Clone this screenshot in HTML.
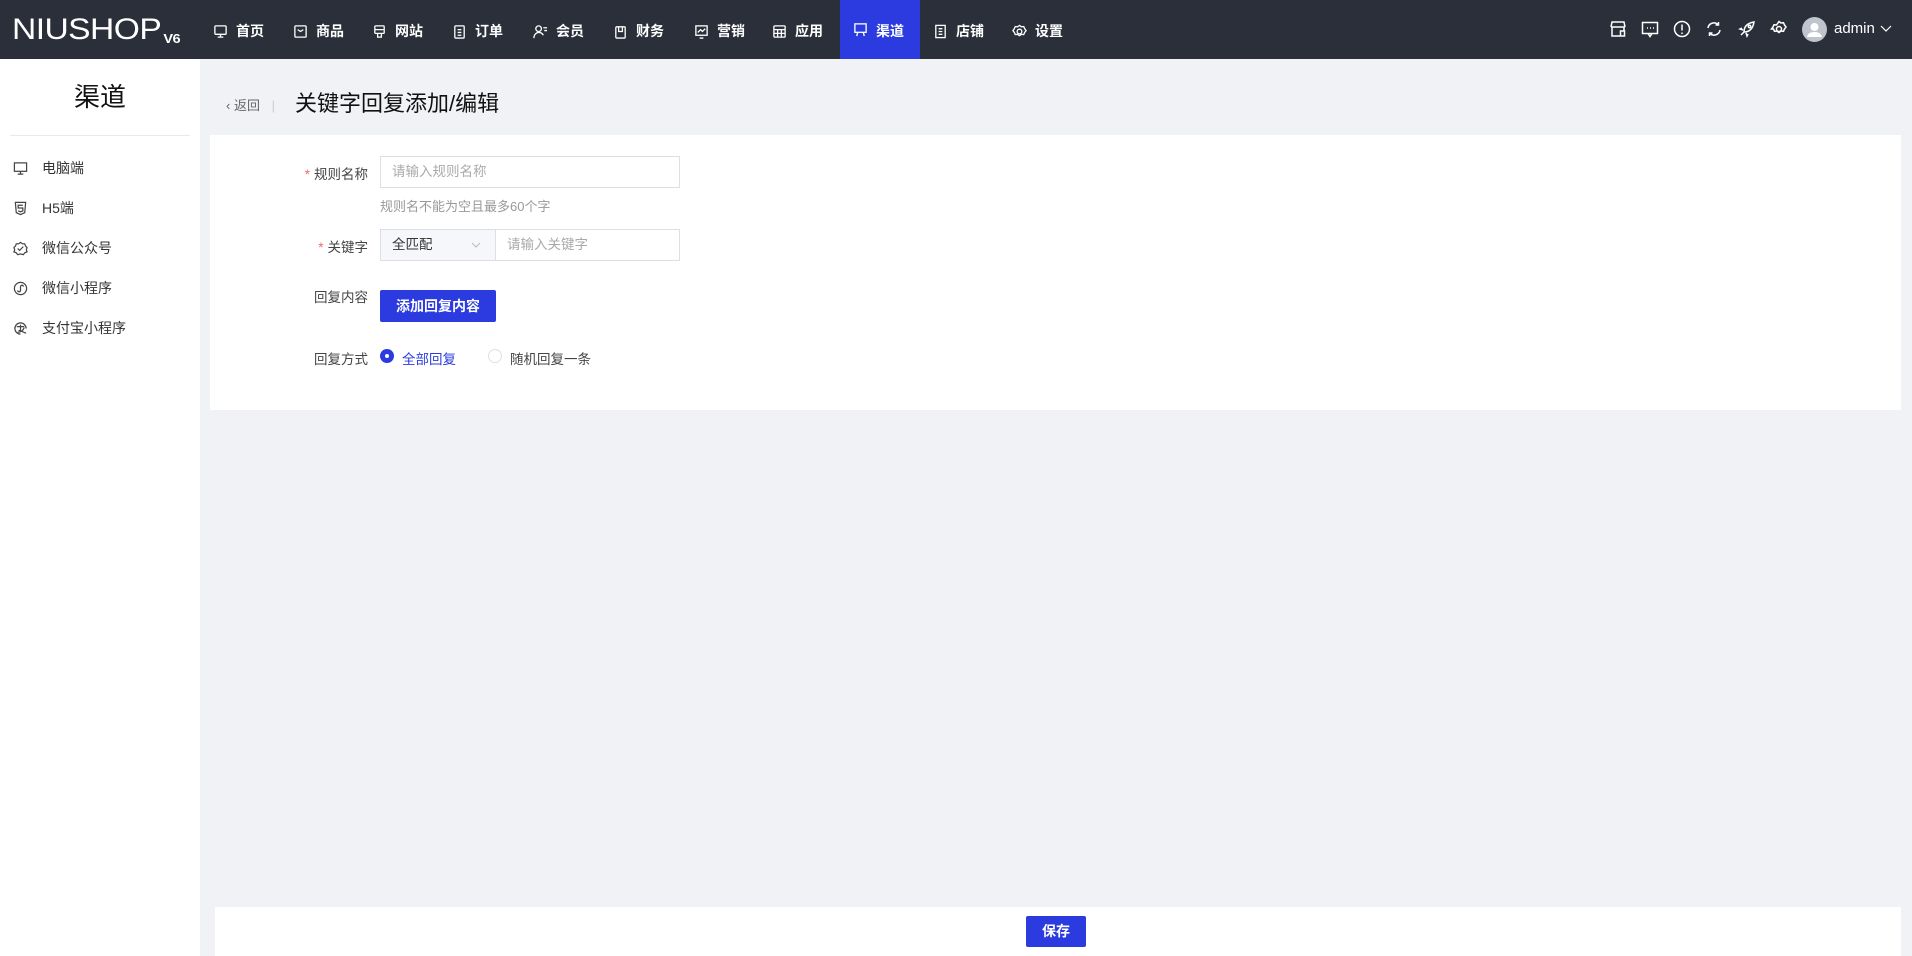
<!DOCTYPE html>
<html><head><meta charset="utf-8"><style>
*{margin:0;padding:0;box-sizing:border-box}
body{width:1912px;height:956px;overflow:hidden;background:#f0f2f5;font-family:"Liberation Sans","Noto Sans CJK SC",sans-serif;position:relative;color:#333}
.top{position:absolute;left:0;top:0;width:1912px;height:59px;background:#2b2f3a;color:#fff}
.logo{position:absolute;left:12px;top:13px;font-size:30px;font-weight:normal;color:#fff;transform:scaleX(1.12);transform-origin:left;letter-spacing:-0.5px}
.logo sub{font-size:13px;vertical-align:baseline;position:relative;top:4px;margin-left:2px;font-weight:bold}
.nav{position:absolute;top:2px;height:59px;line-height:59px;font-size:14px;font-weight:bold;color:#fff;display:flex;align-items:center}
.nav svg{width:15px;height:15px;margin-right:8px;stroke:#fff;fill:none;stroke-width:1.4}
.act{background:#2b3be0;padding:0 0 0 13px;width:80px;top:0}
.ri{position:absolute;top:20px;width:18px;height:18px;stroke:#fff;fill:none;stroke-width:1.5}
.side{position:absolute;left:0;top:59px;width:200px;height:897px;background:#fff}
.side h2{position:absolute;left:0;width:200px;text-align:center;top:18px;font-size:26px;font-weight:normal;color:#111}
.side .div{position:absolute;left:10px;width:180px;top:76px;border-top:1px solid #e8e9ee}
.mi{position:absolute;left:13px;font-size:14px;color:#333;display:flex;align-items:center}
.mi svg{width:15px;height:15px;stroke:#444;fill:none;stroke-width:1.3;margin-right:14px}
.bc{position:absolute;left:226px;top:95px;font-size:13px;color:#666}
.title{position:absolute;left:295px;top:86px;font-size:22px;color:#111}
.card{position:absolute;left:210px;top:135px;width:1691px;height:275px;background:#fff}
.lab{position:absolute;width:160px;left:208px;text-align:right;font-size:13.5px;color:#444}
.lab i{color:#f56c6c;font-style:normal;margin-right:4px}
.inp{position:absolute;border:1px solid #dcdfe6;background:#fff;font-size:13.5px;color:#aaa;padding-left:11px;line-height:30px;height:32px}
.btn{position:absolute;background:#2b3be0;color:#fff;font-weight:bold;font-size:14px;text-align:center;border-radius:2px}
.bot{position:absolute;left:215px;top:907px;width:1686px;height:49px;background:#fff}
</style></head><body>
<div class="top">
<div class="logo">NIUSHOP<sub>V6</sub></div>
<div class="nav" style="left:213px"><svg viewBox="0 0 16 16"><rect x="2" y="2" width="12" height="9" rx="1"/><path d="M8 11v3M5 14h6"/></svg>首页</div>
<div class="nav" style="left:293px"><svg viewBox="0 0 16 16"><rect x="2" y="2" width="12" height="12" rx="1"/><path d="M5 6l3 2 3-2"/></svg>商品</div>
<div class="nav" style="left:372px"><svg viewBox="0 0 16 16"><rect x="3" y="2" width="10" height="8" rx="1"/><path d="M3 6h10M6 10v4h4v-4"/></svg>网站</div>
<div class="nav" style="left:452px"><svg viewBox="0 0 16 16"><rect x="3" y="2" width="10" height="13" rx="1"/><path d="M6 6h4M6 9h4M6 12h4"/></svg>订单</div>
<div class="nav" style="left:533px"><svg viewBox="0 0 16 16"><circle cx="6" cy="5" r="3"/><path d="M1 15c0-4 3-6 5-6s4 1 5 3M11 4h4M12 7h3"/></svg>会员</div>
<div class="nav" style="left:613px"><svg viewBox="0 0 16 16"><rect x="3" y="3" width="10" height="12" rx="1"/><path d="M6 3v5h4V3"/></svg>财务</div>
<div class="nav" style="left:694px"><svg viewBox="0 0 16 16"><rect x="2" y="2" width="12" height="10"/><path d="M4 9l3-3 2 2 3-3M6 15h4"/></svg>营销</div>
<div class="nav" style="left:772px"><svg viewBox="0 0 16 16"><rect x="2" y="2" width="12" height="12" rx="1"/><path d="M2 6h12M2 10h12M6 6v8M10 6v8"/></svg>应用</div>
<div class="nav act" style="left:840px"><svg viewBox="0 0 16 16"><rect x="2" y="2" width="12" height="9"/><path d="M5 11l-1 4M11 11l1 4"/></svg><span style="position:relative;top:2px">渠道</span></div>
<div class="nav" style="left:933px"><svg viewBox="0 0 16 16"><rect x="3" y="1.5" width="10" height="13"/><path d="M6 5h4M6 8h4M6 11h4"/></svg>店铺</div>
<div class="nav" style="left:1012px"><svg viewBox="0 0 16 16"><circle cx="8" cy="8" r="2.5"/><path d="M8 1.5l2 1.5 2.5-.3 1 2.3 1.5 2-1.5 2-1 2.3-2.5-.3-2 1.5-2-1.5-2.5.3-1-2.3L1 7l1.5-2 1-2.3 2.5.3z"/></svg>设置</div>
<svg class="ri" style="left:1609px" viewBox="0 0 18 18"><path d="M2 7l1-5h12l1 5M2 7h14M3 7v9h8M15 11v-4"/><rect x="11.5" y="11" width="4" height="5"/></svg>
<svg class="ri" style="left:1641px" viewBox="0 0 18 18"><rect x="1.5" y="2.5" width="15" height="11"/><path d="M7 13.5l2 3 2-3M6 8h1M9 8h1M12 8h1"/></svg>
<svg class="ri" style="left:1673px" viewBox="0 0 18 18"><circle cx="9" cy="9" r="7.5"/><path d="M9 4.5v6M9 12.5v1.5"/></svg>
<svg class="ri" style="left:1705px" viewBox="0 0 18 18"><path d="M3 8a6 6 0 0 1 10.5-3M15 10a6 6 0 0 1-10.5 3M13.5 2v3h-3M4.5 16v-3h3"/></svg>
<svg class="ri" style="left:1738px" viewBox="0 0 18 18"><path d="M6 12c0-6 4-9 10-10-1 6-4 10-10 10zM6 12l-3 3M4 8l-2 1 3 1M10 14l-1 2-1-3"/><circle cx="11.5" cy="6.5" r="1.2"/></svg>
<svg class="ri" style="left:1770px" viewBox="0 0 18 18"><circle cx="9" cy="9" r="2.5"/><path d="M9 1.5l2 1.5 2.5-.3 1 2.3 1.5 2-1.5 2-1 2.3-2.5-.3-2 1.5-2-1.5-2.5.3-1-2.3L1.5 9 3 7l1-2.3 2.5.3z"/></svg>
<svg style="position:absolute;left:1802px;top:17px;width:25px;height:25px" viewBox="0 0 25 25"><circle cx="12.5" cy="12.5" r="12.5" fill="#c0c4cc"/><circle cx="12.5" cy="10" r="4" fill="#fff"/><path d="M5 20c1-4 4-5 7.5-5s6.5 1 7.5 5z" fill="#fff"/></svg>
<div style="position:absolute;left:1834px;top:20px;font-size:15px;color:#fff">admin</div>
<svg style="position:absolute;left:1880px;top:25px;width:12px;height:8px" viewBox="0 0 12 8"><path d="M1 1l5 5 5-5" stroke="#fff" fill="none" stroke-width="1.2"/></svg>
</div>
<div class="side">
<h2>渠道</h2><div class="div"></div>
<div class="mi" style="top:99px"><svg viewBox="0 0 16 16"><rect x="1.5" y="2" width="13" height="9"/><path d="M8 11v3M5 14h6"/></svg>电脑端</div>
<div class="mi" style="top:139px"><svg viewBox="0 0 16 16"><path d="M2.5 1.5h11l-1 11-4.5 2-4.5-2z"/><path d="M10.5 4.5h-5v3h5v3l-2.5 1-2.5-1"/></svg>H5端</div>
<div class="mi" style="top:179px"><svg viewBox="0 0 16 16"><path d="M8 1.5l2 1.5 2.5 0 .8 2.3 1.7 1.7-.8 2.3.8 2.3-2.5 1-1.5 2-3-.8-3 .8-1.5-2-2.5-1 .8-2.3L1 7l1.7-1.7L3.5 3 6 3z"/><path d="M5 8l2 2 4-4"/></svg>微信公众号</div>
<div class="mi" style="top:219px"><svg viewBox="0 0 16 16"><circle cx="8" cy="8" r="6.5"/><path d="M5 10a1.5 1.5 0 1 0 3 0V6a1.5 1.5 0 1 1 3 0"/></svg>微信小程序</div>
<div class="mi" style="top:259px"><svg viewBox="0 0 16 16"><path d="M14 8A6 6 0 1 0 8 14"/><path d="M4 6h8M8 4v6M5 12c3 0 6-2 7-5M6 10c2 0 5 2 8 3"/></svg>支付宝小程序</div>
</div>
<div class="bc">&lsaquo; 返回 <span style="color:#ccc;margin-left:8px">|</span></div>
<div class="title">关键字回复添加/编辑</div>
<div class="card"></div>
<div class="lab" style="top:163px"><i>*</i>规则名称</div>
<div class="inp" style="left:380px;top:156px;width:300px">请输入规则名称</div>
<div style="position:absolute;left:380px;top:196px;font-size:13px;color:#999">规则名不能为空且最多60个字</div>
<div class="lab" style="top:236px"><i>*</i>关键字</div>
<div class="inp" style="left:380px;top:229px;width:116px;background:#f5f7fa;color:#333">全匹配<svg style="position:absolute;left:90px;top:12px;width:10px;height:6px" viewBox="0 0 10 6"><path d="M1 1l4 4 4-4" stroke="#bbb" fill="none"/></svg></div>
<div class="inp" style="left:495px;top:229px;width:185px">请输入关键字</div>
<div class="lab" style="top:286px">回复内容</div>
<div class="btn" style="left:380px;top:290px;width:116px;height:32px;line-height:32px">添加回复内容</div>
<div class="lab" style="top:348px">回复方式</div>
<div style="position:absolute;left:380px;top:349px;width:14px;height:14px;border-radius:50%;background:#2b3be0"><div style="position:absolute;left:5px;top:5px;width:4px;height:4px;border-radius:50%;background:#fff"></div></div>
<div style="position:absolute;left:402px;top:348px;font-size:13.5px;color:#2b3be0">全部回复</div>
<div style="position:absolute;left:488px;top:349px;width:14px;height:14px;border-radius:50%;border:1px solid #dcdfe6"></div>
<div style="position:absolute;left:510px;top:348px;font-size:13.5px;color:#444">随机回复一条</div>
<div class="bot"></div>
<div class="btn" style="left:1026px;top:916px;width:60px;height:31px;line-height:31px">保存</div>
</body></html>
